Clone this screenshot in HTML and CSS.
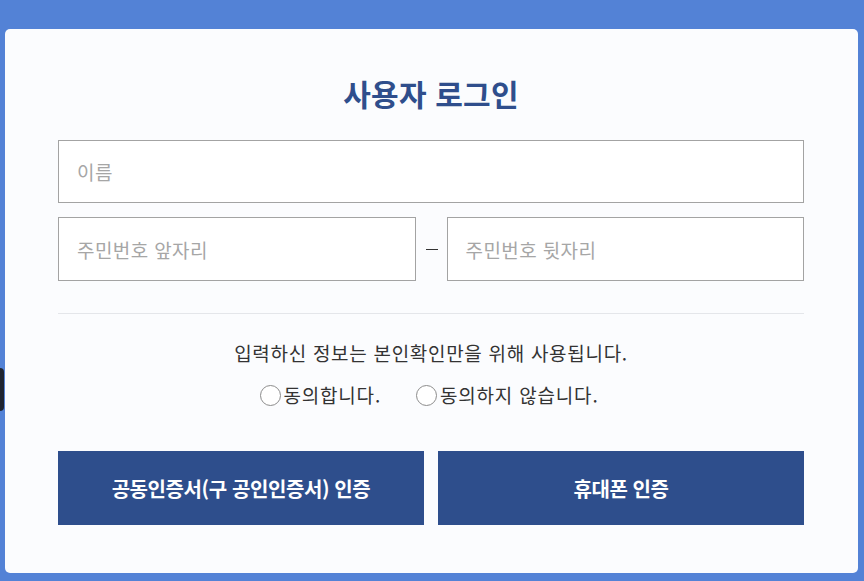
FILE: index.html
```html
<!DOCTYPE html>
<html lang="ko">
<head>
<meta charset="utf-8">
<title>사용자 로그인</title>
<link rel="stylesheet" href="styles.css">
</head>
<body>
<div class="bg-deco"></div>
<main class="card">
  <h1 class="title">사용자 로그인</h1>
  <div class="field full"><span class="ph">이름</span></div>
  <div class="row">
    <div class="field half"><span class="ph">주민번호 앞자리</span></div>
    <span class="dash"></span>
    <div class="field half"><span class="ph">주민번호 뒷자리</span></div>
  </div>
  <hr class="divider">
  <p class="notice">입력하신 정보는 본인확인만을 위해 사용됩니다.</p>
  <div class="radios">
    <label class="radio"><span class="circle"></span>동의합니다.</label>
    <label class="radio"><span class="circle"></span>동의하지 않습니다.</label>
  </div>
  <div class="buttons">
    <button class="btn">공동인증서(구 공인인증서) 인증</button>
    <button class="btn">휴대폰 인증</button>
  </div>
</main>
</body>
</html>
```
FILE: styles.css
```css
html, body {
  margin: 0;
  padding: 0;
}
body {
  width: 864px;
  height: 581px;
  background: #5382d6;
  font-family: "Noto Sans CJK KR", "Noto Sans", sans-serif;
  overflow: hidden;
  position: relative;
}
.bg-deco {
  position: absolute;
  left: -4px;
  top: 368px;
  width: 8px;
  height: 43px;
  background: #1f2430;
  border-radius: 4px;
}
.card {
  position: relative;
  box-sizing: border-box;
  margin: 29px 0 0 5px;
  width: 853px;
  height: 544px;
  background: #fbfcfe;
  border-radius: 5px;
  padding: 46px 54px 0 53px;
  display: flex;
  flex-direction: column;
}
.title {
  margin: 0;
  font-size: 30px;
  line-height: 36px;
  font-weight: 700;
  color: #2f4e8c;
  text-align: center;
  letter-spacing: 0.2px;
}
.field {
  box-sizing: border-box;
  height: 63px;
  background: #ffffff;
  border: 1px solid #a3a3a3;
  display: flex;
  align-items: center;
  padding-left: 18px;
}
.full {
  margin-top: 29px;
}
.ph {
  font-size: 19px;
  color: #a6a6a6;
  letter-spacing: 0.4px;
}
.row {
  display: flex;
  align-items: center;
  margin-top: 14px;
}
.half {
  width: 358px;
  height: 64px;
}
.dash {
  width: 12px;
  height: 1px;
  background: #333;
  margin: 0 9px 0 10px;
}
.divider {
  margin: 32px 0 0;
  border: 0;
  border-top: 1px solid #e4e6ea;
  height: 0;
}
.notice {
  margin: 27px 0 0;
  text-align: center;
  font-size: 19px;
  line-height: 24px;
  color: #333;
  letter-spacing: 0.7px;
}
.radios {
  display: flex;
  justify-content: center;
  gap: 35px;
  margin-top: 18px;
  padding-right: 4px;
}
.radio {
  display: flex;
  align-items: center;
  font-size: 19px;
  line-height: 24px;
  color: #333;
  letter-spacing: 0.8px;
}
.circle {
  box-sizing: border-box;
  width: 21px;
  height: 21px;
  border: 1px solid #8c8c8c;
  border-radius: 50%;
  background: #fff;
  margin-right: 3px;
}
.buttons {
  display: flex;
  gap: 14px;
  margin-top: 44px;
}
.btn {
  flex: 1;
  height: 74px;
  border: 0;
  background: #2e4e8c;
  color: #ffffff;
  font-family: inherit;
  font-size: 20px;
  font-weight: 700;
  letter-spacing: -0.4px;
}
```
